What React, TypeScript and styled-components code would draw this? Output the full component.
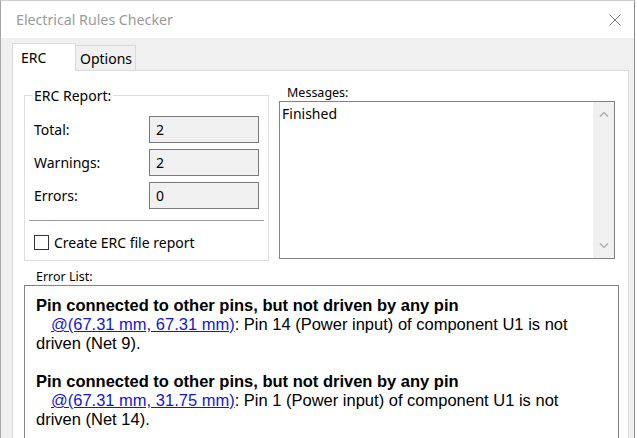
import React from "react";
import styled, { createGlobalStyle } from "styled-components";

const GlobalStyle = createGlobalStyle`
  html, body { margin: 0; padding: 0; background: #ffffff; }
  body { font-family: "Noto Sans", "Open Sans", sans-serif; color: #000; }
  * { box-sizing: border-box; }
`;

const Window = styled.div`
  width: 635px;
  height: 438px;
  border-left: 1px solid #a6a6a6;
  border-right: 1px solid #8c8c8c;
  border-top: 1px solid #cfcfcf;
  background: #f0f0f0;
  display: flex;
  flex-direction: column;
  overflow: hidden;
`;

const TitleBar = styled.div`
  height: 37px;
  flex: none;
  background: #ffffff;
  display: flex;
  align-items: center;
  justify-content: space-between;
  padding: 0 13px 0 15px;
`;

const Title = styled.span`
  font-size: 14.2px;
  color: #9a9a9a;
  line-height: 20px;
`;

const CloseButton = styled.span`
  display: flex;
  width: 12px;
  height: 12px;
`;

const Body = styled.div`
  flex: 1;
  display: flex;
  flex-direction: column;
  padding: 5px 5px 0 11px;
  min-height: 0;
`;

const TabRow = styled.div`
  display: flex;
  align-items: flex-end;
  height: 27px;
  flex: none;
`;

const Tab = styled.div<{ $active?: boolean }>`
  position: relative;
  z-index: ${(p) => (p.$active ? 1 : 0)};
  display: flex;
  align-items: center;
  font-size: 14px;
  line-height: 19px;
  height: ${(p) => (p.$active ? "28px" : "25px")};
  margin-bottom: ${(p) => (p.$active ? "-1px" : "0")};
  width: ${(p) => (p.$active ? "64px" : "60px")};
  padding-left: ${(p) => (p.$active ? "8px" : "4px")};
  background: ${(p) => (p.$active ? "#ffffff" : "#f0f0f0")};
  border: 1px solid #d9d9d9;
  border-left: ${(p) => (p.$active ? "1px solid #d9d9d9" : "none")};
  border-bottom: none;
`;

const Panel = styled.div`
  flex: 1;
  background: #ffffff;
  border: 1px solid #d9d9d9;
  border-bottom: none;
  padding: 14px 9px 0 11px;
  display: flex;
  flex-direction: column;
`;

const TopRow = styled.div`
  display: flex;
  align-items: flex-start;
  gap: 10px;
`;

const Group = styled.fieldset`
  margin: 1px 0 0;
  width: 245px;
  flex: none;
  min-width: 0;
  padding: 11px 9px 8px;
  border: 1px solid #dcdcdc;
`;

const Legend = styled.legend`
  padding: 0 2px;
  margin-left: -2px;
  font-size: 14px;
  line-height: 19px;
`;

const Fields = styled.div`
  display: grid;
  grid-template-columns: 115px 110px;
  row-gap: 6px;
  align-items: center;
`;

const FieldLabel = styled.span`
  font-size: 14px;
  line-height: 19px;
`;

const ValueBox = styled.div`
  height: 27px;
  background: #f0f0f0;
  border: 1px solid #7a7a7a;
  padding-left: 6px;
  display: flex;
  align-items: center;
  font-size: 14px;
`;

const Separator = styled.div`
  height: 1px;
  background: #a0a0a0;
  margin: 11px -5px 0;
`;

const CheckRow = styled.label`
  display: flex;
  align-items: center;
  gap: 5px;
  height: 19px;
  margin-top: 12px;
  font-size: 14px;
  line-height: 19px;
`;

const CheckBox = styled.span`
  width: 15px;
  height: 15px;
  border: 1px solid #333333;
  background: #ffffff;
  flex: none;
`;

const MessagesColumn = styled.div`
  width: 336px;
  flex: none;
  display: flex;
  flex-direction: column;
`;

const SmallLabel = styled.div<{ $indent: number }>`
  font-size: 12.5px;
  line-height: 16px;
  padding-left: ${(p) => p.$indent}px;
`;

const ListBox = styled.div`
  height: 158px;
  border: 1px solid #828282;
  background: #ffffff;
  display: flex;
`;

const ListText = styled.div`
  flex: 1;
  padding: 2px 0 0 2px;
  font-size: 14px;
  line-height: 19px;
`;

const ScrollBar = styled.div`
  width: 21px;
  flex: none;
  background: #f0f0f0;
  display: flex;
  flex-direction: column;
  justify-content: space-between;
  align-items: center;
  padding: 9px 0 9px;
`;

const ErrorLabel = styled(SmallLabel)`
  margin-top: 8px;
`;

const ErrorBox = styled.div`
  height: 200px;
  border: 1px solid #828282;
  background: #ffffff;
  padding: 10px 30px 0 11px;
  font-family: "Liberation Sans", Arial, sans-serif;
  font-size: 16.5px;
  line-height: 19px;
`;

const Entry = styled.div`
  margin-bottom: 19px;
`;

const EntryTitle = styled.div`
  font-weight: bold;
`;

const EntryDetail = styled.div`
  text-indent: 15px;
`;

const Location = styled.a`
  color: #1515d6;
  text-decoration: underline;
`;

const Chevron = ({ up }: { up?: boolean }) => (
  <svg width="10" height="6" viewBox="0 0 10 6">
    <polyline
      points={up ? "1,5.5 5,1.5 9,5.5" : "1,0.5 5,4.5 9,0.5"}
      fill="none"
      stroke="#a6a6a6"
      strokeWidth="1.2"
    />
  </svg>
);

const errors = [
  { loc: "@(67.31 mm, 67.31 mm)", text: ": Pin 14 (Power input) of component U1 is not driven (Net 9)." },
  { loc: "@(67.31 mm, 31.75 mm)", text: ": Pin 1 (Power input) of component U1 is not driven (Net 14)." },
];

const fields = [
  { label: "Total:", value: "2" },
  { label: "Warnings:", value: "2" },
  { label: "Errors:", value: "0" },
];

export default function App() {
  return (
    <>
      <GlobalStyle />
      <Window>
        <TitleBar>
          <Title>Electrical Rules Checker</Title>
          <CloseButton>
            <svg width="12" height="12" viewBox="0 0 12 12">
              <path d="M0.5 0.5 L11.5 11.5 M11.5 0.5 L0.5 11.5" stroke="#7a7a7a" strokeWidth="1" fill="none" />
            </svg>
          </CloseButton>
        </TitleBar>
        <Body>
          <TabRow>
            <Tab $active>ERC</Tab>
            <Tab>Options</Tab>
          </TabRow>
          <Panel>
            <TopRow>
              <Group>
                <Legend>ERC Report:</Legend>
                <Fields>
                  {fields.map((f) => (
                    <React.Fragment key={f.label}>
                      <FieldLabel>{f.label}</FieldLabel>
                      <ValueBox>{f.value}</ValueBox>
                    </React.Fragment>
                  ))}
                </Fields>
                <Separator />
                <CheckRow>
                  <CheckBox />
                  Create ERC file report
                </CheckRow>
              </Group>
              <MessagesColumn>
                <SmallLabel $indent={8}>Messages:</SmallLabel>
                <ListBox>
                  <ListText>Finished</ListText>
                  <ScrollBar>
                    <Chevron up />
                    <Chevron />
                  </ScrollBar>
                </ListBox>
              </MessagesColumn>
            </TopRow>
            <ErrorLabel $indent={12}>Error List:</ErrorLabel>
            <ErrorBox>
              {errors.map((e, i) => (
                <Entry key={i}>
                  <EntryTitle>Pin connected to other pins, but not driven by any pin</EntryTitle>
                  <EntryDetail>
                    <Location href="#">{e.loc}</Location>
                    {e.text}
                  </EntryDetail>
                </Entry>
              ))}
            </ErrorBox>
          </Panel>
        </Body>
      </Window>
    </>
  );
}
